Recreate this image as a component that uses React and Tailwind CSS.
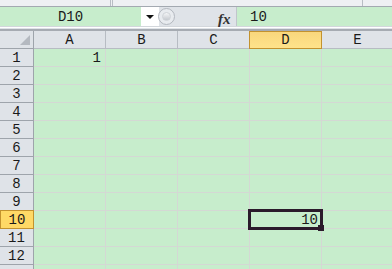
import React from "react";

const cols = ["A", "B", "C", "D", "E"];
const rows = Array.from({ length: 13 }, (_, i) => i + 1);

export default function App() {
  const mono = { fontFamily: '"Liberation Mono", "DejaVu Sans Mono", monospace' };
  return (
    <div
      className="w-[392px] h-[269px] overflow-hidden bg-[#dfe3e8] flex flex-col text-[#1a1a1a]"
      style={mono}
    >
      {/* top strip */}
      <div className="h-[7px] shrink-0 bg-[#eef0f3] border-b border-[#a3a9b1] flex">
        <div className="w-[111px] border-r border-[#b8bdc4]" />
        <div className="w-[2px] border-r border-[#b8bdc4]" />
        <div className="w-[250px] border-r border-[#b8bdc4]" />
      </div>

      {/* formula bar */}
      <div className="h-[19px] shrink-0 flex items-stretch">
        <div className="w-[141px] bg-[#c7edcc] flex items-center justify-center text-[14px] leading-none pt-[1px]">
          D10
        </div>
        <div className="w-[18px] bg-white flex items-center justify-center">
          <div className="w-0 h-0 border-l-[4px] border-r-[4px] border-t-[4px] border-l-transparent border-r-transparent border-t-[#111]" />
        </div>
        <div className="relative w-[77px] bg-[#dfe3e8] flex items-center">
          <div className="absolute left-[-1px] top-[1px] w-[17px] h-[17px] rounded-full border border-[#b3b8bf] bg-[#e8ebef] flex items-center justify-center">
            <div className="w-[9px] h-[9px] rounded-full bg-gradient-to-b from-[#f4f5f7] to-[#c5c9cf] border border-[#cfd3d8]" />
          </div>
          <span
            className="absolute left-[59px] top-[1px] text-[15px] italic font-bold text-[#333]"
            style={{ fontFamily: '"Liberation Serif", serif' }}
          >
            fx
          </span>
        </div>
        <div className="flex-1 bg-[#c7edcc] border-l border-[#c0c5cb] flex items-center pl-[13px] text-[14px] leading-none pt-[1px]">
          10
        </div>
      </div>

      {/* separator lines */}
      <div className="h-[1px] shrink-0 bg-[#d3d7dc]" />
      <div className="h-[1px] shrink-0 bg-white" />
      <div className="h-[1px] shrink-0 bg-[#dfe3e8]" />
      <div className="h-[2px] shrink-0 bg-[#a6abb2]" />

      {/* sheet */}
      <div className="grid grid-cols-[34px_repeat(5,72px)] shrink-0">
        {/* header row */}
        <div className="relative h-[18px] bg-[#dfe3e8] border-r border-b border-[#9ea4ab]">
          <div className="absolute right-[3px] bottom-[3px] w-0 h-0 border-l-[10px] border-t-[10px] border-l-transparent border-t-transparent border-r-0 border-b-[10px] border-b-[#b4b9c0]" />
        </div>
        {cols.map((c) =>
          c === "D" ? (
            <div
              key={c}
              className="h-[18px] bg-gradient-to-b from-[#f9d77d] to-[#ffe38a] border border-[#c3922e] -ml-[1px] flex items-center justify-center text-[14px] leading-none"
            >
              {c}
            </div>
          ) : (
            <div
              key={c}
              className="h-[18px] bg-[#dfe3e8] border-r border-b border-[#b7bcc3] flex items-center justify-center text-[14px] leading-none"
            >
              {c}
            </div>
          )
        )}

        {rows.map((r) => (
          <React.Fragment key={r}>
            {r === 10 ? (
              <div className="bg-[#ffd966] border border-[#c3922e] -mt-[1px] h-[19px] flex items-center justify-center text-[14px] leading-none">
                {r}
              </div>
            ) : (
              <div className="h-[18px] bg-[#dfe3e8] border-r border-b border-[#9ea4ab] flex items-center justify-center text-[14px] leading-none">
                {r < 13 ? r : ""}
              </div>
            )}
            {cols.map((c) => {
              const isSel = r === 10 && c === "D";
              let content = null;
              if (r === 1 && c === "A") content = "1";
              return (
                <div
                  key={c}
                  className="relative h-[18px] bg-[#c7edcc] border-r border-b border-[#d4d8d4] flex items-center justify-end pr-[4px] text-[14px] leading-none"
                >
                  {content}
                  {isSel && (
                    <div className="absolute z-10 left-[-2px] top-[-2px] w-[75px] h-[21px] border-[3px] border-[#2b1a2b] flex items-center justify-end pr-[2px] text-[14px] leading-none">
                      10
                      <div className="absolute right-[-4px] bottom-[-4px] w-[6px] h-[6px] bg-[#2b1a2b]" />
                    </div>
                  )}
                </div>
              );
            })}
          </React.Fragment>
        ))}
      </div>
    </div>
  );
}
